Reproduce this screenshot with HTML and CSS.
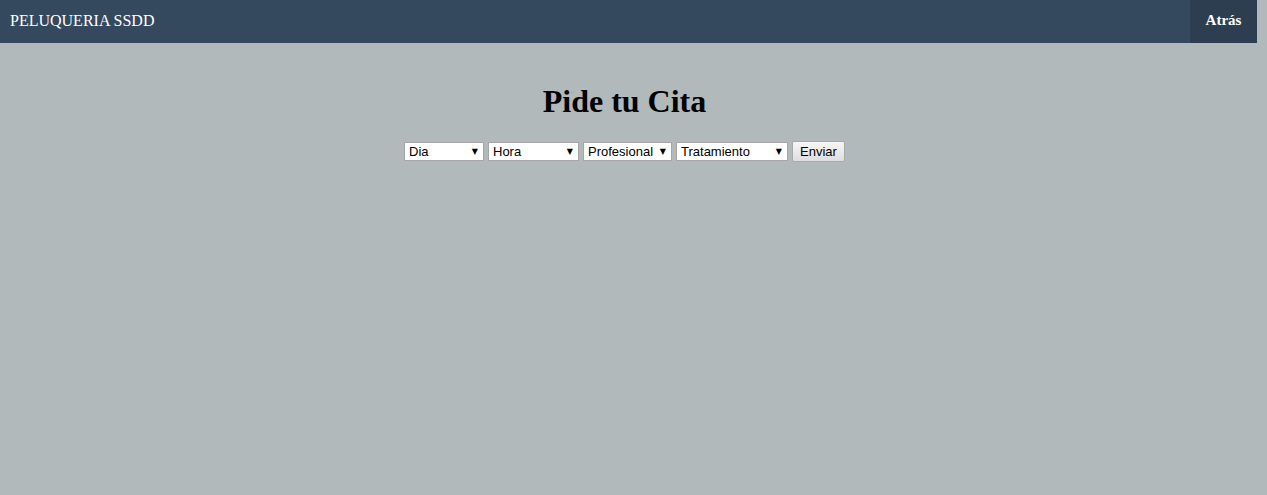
FILE: index.html
```html
<!DOCTYPE html>
<html lang="es">
<head>
<meta charset="utf-8">
<title>Pide tu Cita</title>
<link rel="stylesheet" href="styles.css">
</head>
<body>
<nav class="navbar">
  <a class="brand" href="#">PELUQUERIA SSDD</a>
  <a class="back" href="#">Atrás</a>
</nav>
<main class="content">
  <h1 class="title">Pide tu Cita</h1>
  <form class="form">
    <span class="sel w-dia"><select><option>Dia</option></select></span>
    <span class="sel w-hora"><select><option>Hora</option></select></span>
    <span class="sel w-prof"><select><option>Profesional</option></select></span>
    <span class="sel w-trat"><select><option>Tratamiento</option></select></span>
    <button type="button" class="btn">Enviar</button>
  </form>
</main>
</body>
</html>
```
FILE: styles.css
```css
html, body {
  margin: 0;
  padding: 0;
  height: 100%;
}
body {
  background: #b1b9bb;
  font-family: "Liberation Serif", "Times New Roman", serif;
}
.navbar {
  display: flex;
  justify-content: space-between;
  align-items: stretch;
  height: 43px;
  width: 1257px;
  background: #34495e;
}
.brand {
  color: #ffffff;
  text-decoration: none;
  font-size: 16px;
  padding: 0 10px;
  line-height: 41px;
}
.back {
  color: #ffffff;
  text-decoration: none;
  font-weight: bold;
  font-size: 15px;
  background: #2c3e50;
  width: 67px;
  text-align: center;
  line-height: 41px;
}
.content {
  display: flex;
  flex-direction: column;
  align-items: center;
  padding-right: 18px;
}
.title {
  font-size: 32px;
  font-weight: bold;
  margin: 40px 0 21px;
  line-height: 37px;
  color: #000;
}
.form {
  display: flex;
  gap: 4px;
  align-items: center;
}
.sel {
  position: relative;
  display: block;
  height: 19px;
}
.sel select {
  appearance: none;
  -webkit-appearance: none;
  width: 100%;
  height: 19px;
  margin: 0;
  padding: 0 0 0 4px;
  border: 1px solid #a6a6a6;
  border-radius: 0;
  background: #ffffff;
  font-family: "Liberation Sans", Arial, sans-serif;
  font-size: 13px;
  color: #000;
  line-height: 17px;
}
.sel::after {
  content: "▼";
  position: absolute;
  right: 6px;
  top: 5px;
  font-size: 8px;
  line-height: 9px;
  color: #000;
  pointer-events: none;
  font-family: "DejaVu Sans", sans-serif;
}
.w-dia { width: 80px; }
.w-hora { width: 91px; }
.w-prof { width: 89px; }
.w-trat { width: 112px; }
.btn {
  height: 21px;
  width: 53px;
  margin: 0;
  padding: 0;
  border: 1px solid #a9a9a9;
  border-radius: 2px;
  background: linear-gradient(#f6f6f6, #dedede);
  font-family: "Liberation Sans", Arial, sans-serif;
  font-size: 13px;
  color: #000;
}
```
